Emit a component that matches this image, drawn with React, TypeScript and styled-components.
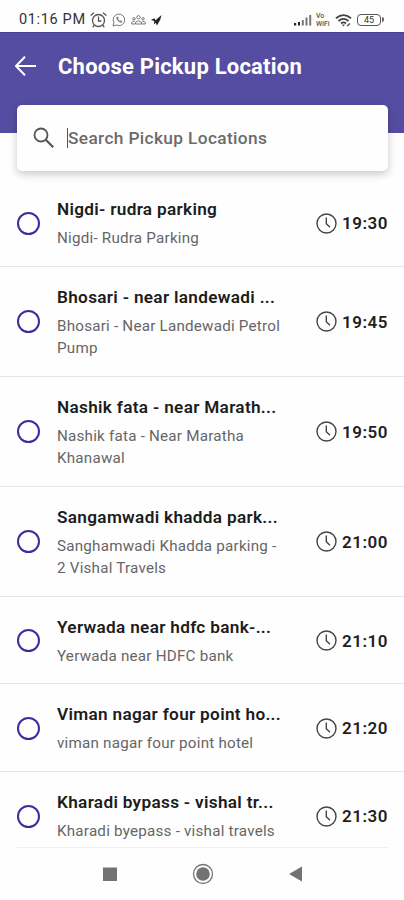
import React from "react";
import styled, { createGlobalStyle } from "styled-components";

const GlobalStyle = createGlobalStyle`
  * { box-sizing: border-box; }
  body { margin: 0; background: #fefefe; font-family: Roboto, "Liberation Sans", sans-serif; }
`;

const Screen = styled.main`
  width: 404px;
  height: 900px;
  display: flex;
  flex-direction: column;
  overflow: hidden;
  background: #fefefe;
`;

const StatusBar = styled.div`
  height: 32px;
  flex: none;
  display: flex;
  align-items: center;
  justify-content: space-between;
  padding: 8px 23px 0 19px;
  color: #333;
`;

const StatusGroup = styled.div<{ $gap: number }>`
  display: flex;
  align-items: center;
  gap: ${(p) => p.$gap}px;
  svg { display: block; }
`;

const Clock = styled.span`
  font-size: 14.5px;
  line-height: 18px;
  letter-spacing: 0.65px;
  white-space: nowrap;
  width: 68px;
`;

const Header = styled.header`
  height: 101px;
  flex: none;
  display: flex;
  align-items: flex-start;
  padding: 20px 15px 0;
  gap: 22px;
  background: #554da1;
  border-top: 1px solid #4a4196;
  color: #fff;
  svg { display: block; margin-top: 3px; }
`;

const Heading = styled.h1`
  margin: 0;
  font-size: 22px;
  line-height: 27px;
  font-weight: 700;
  letter-spacing: 0.22px;
  white-space: nowrap;
`;

const SearchBox = styled.label`
  height: 66px;
  flex: none;
  margin: -28px 16px 0 17px;
  display: flex;
  align-items: center;
  padding-left: 16px;
  border-radius: 5px;
  background: #fefefe;
  box-shadow: 0 3px 9px rgba(0, 0, 0, 0.22);
  z-index: 1;
`;

const Caret = styled.span`
  width: 1px;
  height: 20px;
  margin-left: 12px;
  background: #555;
`;

const Placeholder = styled.span`
  font-size: 17.3px;
  line-height: 22px;
  font-weight: 500;
  letter-spacing: 0.36px;
  color: #6b6b6b;
  white-space: nowrap;
`;

const List = styled.ul`
  list-style: none;
  margin: 0;
  padding: 8px 0 0;
  flex: none;
  height: 676px;
  overflow: hidden;
`;

const Row = styled.li`
  display: flex;
  align-items: center;
  padding: 18px 16px 16.9px 17px;
  border-bottom: 1px solid #e6e6e6;
`;

const Radio = styled.span`
  width: 23px;
  height: 23px;
  flex: none;
  border: 2px solid #3a2c9c;
  border-radius: 50%;
`;

const Details = styled.div`
  flex: 1;
  min-width: 0;
  margin-left: 17px;
`;

const Name = styled.div`
  font-size: 17.2px;
  line-height: 24px;
  font-weight: 600;
  letter-spacing: 0.31px;
  color: #1c1c1c;
  white-space: nowrap;
`;

const Address = styled.div`
  margin-top: 6px;
  font-size: 15.2px;
  line-height: 22px;
  letter-spacing: 0.22px;
  color: #666;
  white-space: pre;
`;

const Departure = styled.div`
  flex: none;
  display: flex;
  align-items: center;
  gap: 5px;
  svg { display: block; }
`;

const Time = styled.span`
  width: 46px;
  font-size: 17px;
  line-height: 22px;
  font-weight: 600;
  letter-spacing: 0.5px;
  color: #1f1f1f;
`;

const NavBar = styled.nav`
  flex: 1;
  margin: 0 16px 0 17px;
  border-top: 1px solid #f0f0f0;
  display: flex;
  align-items: flex-start;
  padding: 15px 0 0 86px;
  gap: 75px;
  svg { display: block; }
`;

type Stop = { name: string; address: string; time: string };

const stops: Stop[] = [
  { name: "Nigdi- rudra parking", address: "Nigdi- Rudra Parking", time: "19:30" },
  { name: "Bhosari - near landewadi ...", address: "Bhosari - Near Landewadi Petrol\nPump", time: "19:45" },
  { name: "Nashik fata - near Marath...", address: "Nashik fata - Near Maratha\nKhanawal", time: "19:50" },
  { name: "Sangamwadi khadda park...", address: "Sanghamwadi Khadda parking -\n2 Vishal Travels", time: "21:00" },
  { name: "Yerwada near hdfc bank-...", address: "Yerwada near HDFC bank", time: "21:10" },
  { name: "Viman nagar four point ho...", address: "viman nagar four point hotel", time: "21:20" },
  { name: "Kharadi bypass - vishal tr...", address: "Kharadi byepass - vishal travels", time: "21:30" },
];

const AlarmIcon = () => (
  <svg width="17" height="16" viewBox="0 0 17 16" fill="none" stroke="#555" strokeWidth="1.3" strokeLinecap="round">
    <circle cx="8.5" cy="8.5" r="6" />
    <path d="M8.5 5v4H11M1 3.2 3.6 1M16 3.2 13.4 1M4 13.5l-1 1.3M13 13.5l1 1.3" />
  </svg>
);

const ChatIcon = () => (
  <svg width="14" height="14" viewBox="0 0 14 14" fill="none" stroke="#777" strokeWidth="1">
    <path d="M1 13l.9-3.2A5.8 5.8 0 1 1 4.2 12L1 13Z" />
    <path d="M4.6 4.2c-.5 2.6 2.4 5.4 5 5.3l.5-1.3-1.5-.8-.8.6C6.8 7.5 6.300 6.800 6 6l.6-.7-.7-1.5Z" fill="#888" strokeWidth=".3" />
  </svg>
);

const PeopleIcon = () => (
  <svg width="15" height="10" viewBox="0 0 15 10" fill="none" stroke="#777" strokeWidth="1">
    <circle cx="7.5" cy="2.3" r="1.7" />
    <circle cx="3" cy="3.8" r="1.2" />
    <circle cx="12" cy="3.8" r="1.2" />
    <path d="M4.5 9V7.2Q7.5 4.4 10.5 7.2V9ZM4 9H.7V7.5Q1.7 6 3.5 6.3M11 9h3.3V7.5Q13.3 6 11.5 6.3" />
  </svg>
);

const ArrowMark = () => (
  <svg width="11" height="11" viewBox="0 0 11 11">
    <path d="M0 5 3.200 3.300 4.600 5.200 10.500 0 9.300 4.500 6 10.500 4.700 7.800 2.800 9.500 3.300 6Z" fill="#222" />
  </svg>
);

const SignalIcon = () => (
  <svg width="18" height="12" viewBox="0 0 18 12">
    <path d="M0 9h2.200v2.500H0zM4 8h2v3.500H4z" fill="#222" />
    <path d="M7.800 6h2v5.500h-2zM11.500 3.500h2v8h-2zM15.200 1h2v10.500h-2z" fill="#777" />
  </svg>
);

const NetworkLabel = styled.span`
  display: flex;
  flex-direction: column;
  width: 15px;
  font-size: 7px;
  line-height: 8.5px;
  font-weight: 500;
  color: #555;
`;

const WifiIcon = () => (
  <svg width="17" height="13" viewBox="0 0 17 13" fill="none" stroke="#444" strokeWidth="1.8">
    <path d="M1 4.3Q8.500-2 16 4.300M3.500 7Q8.500 2.700 13.500 7M6 9.500Q8.500 7.300 11 9.500" />
    <path d="M7 10.500h3L8.500 12.500Z" fill="#444" stroke="none" />
    <path d="M12 12l3-2.500" strokeWidth="1.2" />
  </svg>
);

const Battery = styled.span`
  position: relative;
  width: 24px;
  height: 12px;
  margin-left: 1px;
  border: 1.5px solid #555;
  border-radius: 4px;
  font-size: 9px;
  line-height: 10px;
  text-align: center;
  &::after {
    content: "";
    position: absolute;
    right: -4px;
    top: 2px;
    width: 2px;
    height: 5px;
    border-radius: 0 2px 2px 0;
    background: #666;
  }
`;

const BackIcon = () => (
  <svg width="21" height="20" viewBox="0 0 21 20" fill="none" stroke="#fff" strokeWidth="2">
    <path d="M21 10H1.500M10 .8.9 10 10 19.200" />
  </svg>
);

const SearchIcon = () => (
  <svg width="22" height="22" viewBox="0 0 22 22" fill="none" stroke="#555" strokeWidth="1.8">
    <circle cx="8" cy="8" r="6.500" />
    <path d="M12.800 12.800 20.200 20.200" strokeWidth="2.200" />
  </svg>
);

const ClockIcon = () => (
  <svg width="21" height="21" viewBox="0 0 21 21" fill="none" stroke="#444" strokeWidth="1.4">
    <circle cx="10.500" cy="10.500" r="9.500" />
    <path d="M10.300 4.500V10.800L14 14.300" />
  </svg>
);

export default function App() {
  return (
    <Screen>
      <GlobalStyle />
      <StatusBar>
        <StatusGroup $gap={5}>
          <StatusGroup $gap={3}>
            <Clock>01:16 PM</Clock>
            <AlarmIcon />
          </StatusGroup>
          <ChatIcon />
          <PeopleIcon />
          <ArrowMark />
        </StatusGroup>
        <StatusGroup $gap={4}>
          <SignalIcon />
          <NetworkLabel>
            <span>Vo</span>
            <span>WiFi</span>
          </NetworkLabel>
          <WifiIcon />
          <Battery>45</Battery>
        </StatusGroup>
      </StatusBar>
      <Header>
        <BackIcon />
        <Heading>Choose Pickup Location</Heading>
      </Header>
      <SearchBox>
        <SearchIcon />
        <Caret />
        <Placeholder>Search Pickup Locations</Placeholder>
      </SearchBox>
      <List>
        {stops.map((s) => (
          <Row key={s.time}>
            <Radio />
            <Details>
              <Name>{s.name}</Name>
              <Address>{s.address}</Address>
            </Details>
            <Departure>
              <ClockIcon />
              <Time>{s.time}</Time>
            </Departure>
          </Row>
        ))}
      </List>
      <NavBar>
        <svg width="14" height="22" viewBox="0 0 14 22">
          <rect y="4.500" width="14" height="13.500" fill="#737373" />
        </svg>
        <svg width="22" height="22" viewBox="0 0 22 22">
          <circle cx="11" cy="11" r="9.500" fill="none" stroke="#777" strokeWidth="1.3" />
          <circle cx="11" cy="11" r="6.800" fill="#737373" />
        </svg>
        <svg width="13" height="22" viewBox="0 0 13 22">
          <path d="M13 3.500v15L0 11Z" fill="#737373" />
        </svg>
      </NavBar>
    </Screen>
  );
}
